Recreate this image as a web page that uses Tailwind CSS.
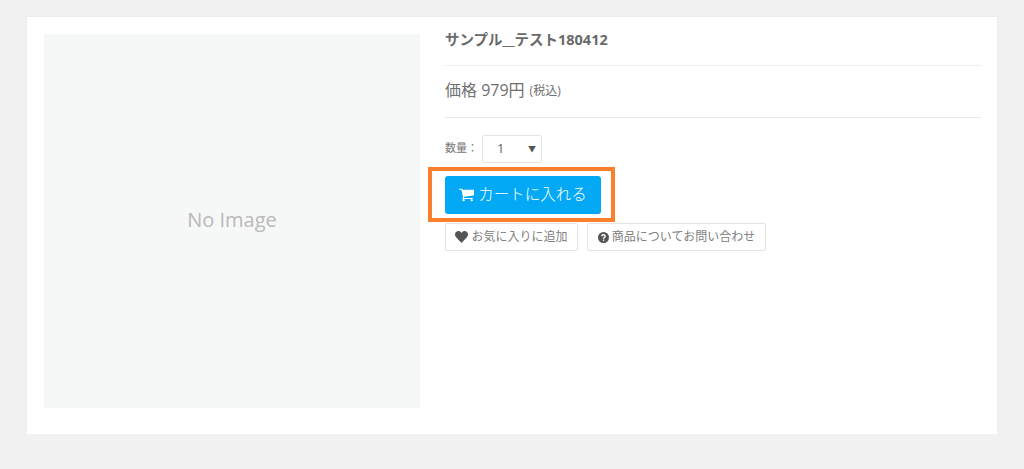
<!DOCTYPE html>
<html lang="ja">
<head>
  <meta charset="UTF-8" />
  <meta name="viewport" content="width=device-width, initial-scale=1.0" />
  <title>サンプル__テスト180412</title>
  <script src="https://cdn.jsdelivr.net/npm/@tailwindcss/browser@4"></script>
</head>
<body class="bg-[#f1f1f1] h-[469px] overflow-hidden font-['Open_Sans','Noto_Sans_CJK_JP',sans-serif] text-[#666]">
  <main class="mx-[27px] mt-4 h-[418px] w-[970px] absolute bg-white border-t border-[#ececec] flex pl-[17px] pt-[17px]">
    <!-- No Image -->
    <div class="w-[376px] h-[374px] bg-[#f6f8f7] flex items-center justify-center pb-[3px] text-[20px] text-[#b9b9b9]">No Image</div>

    <section class="w-[536px] ml-[25px]">
      <h1 class="h-[37px] -mt-[5px] pt-[1px] text-[14.5px] leading-[20px] font-bold text-[#6a6a6a] border-b border-[#eee]">サンプル__テスト180412</h1>

      <div class="h-[52px] flex items-center pb-[3px] border-b border-[#e8e8e8] text-[16px] text-[#707070]">
        価格 979円<span class="ml-[5px] text-[12px] mt-[2px]">(税込)</span>
      </div>

      <div class="mt-[17px] flex items-center text-[11px] text-[#777]">
        <span class="w-[37px] -mt-[2px]">数量：</span>
        <div class="w-[60px] h-[28px] border border-[#e5e5e5] rounded-[2px] flex items-center justify-between pl-[14px] pr-[5px] text-[13px] text-[#666]">
          <span>1</span><span class="text-[8px] text-[#555]">▼</span>
        </div>
      </div>

      <div class="relative mt-[13px] w-[156px]">
        <button class="w-[156px] h-[38px] bg-[#03a9f4] rounded-[3px] text-white text-[15.5px] font-light flex items-center justify-center gap-[4px]">
          <svg class="w-[15px] h-[14px]" viewBox="0 0 1664 1408" fill="currentColor"><path d="M640 1280q0 53-37.5 90.5T512 1408t-90.5-37.5T384 1280t37.5-90.5T512 1152t90.5 37.5T640 1280zm896 0q0 53-37.5 90.5T1408 1408t-90.5-37.5T1280 1280t37.500-90.5T1408 1152t90.5 37.5T1536 1280zm128-1088v512q0 24-16.5 42.5T1607 768L563 890q13 60 13 70 0 16-24 64h920q26 0 45 19t19 45-19 45-45 19H448q-26 0-45-19t-19-45q0-11 8-31.5t16-36 21.500-40T445 924L268 128H64q-26 0-45-19T0 64t19-45T64 0h256q16 0 28.500 6.500T368 24t13 24.500 8 26 5.500 29.500 4.500 24h1201q26 0 45 19t19 45z"/></svg>
          <span>カートに入れる</span>
        </button>
        <!-- annotation frame -->
        <div class="absolute -left-[17px] -top-[9px] w-[187px] h-[55px] border-4 border-[#fc7f2b]"></div>
      </div>

      <div class="mt-[9px] flex gap-[9px] text-[12px] text-[#808080]">
        <button class="w-[133px] h-[28px] border border-[#e3e3e3] rounded-[2px] flex items-center justify-center gap-[3px]">
          <svg class="w-[13px] h-[12px] text-[#555]" viewBox="0 0 24 22" fill="currentColor"><path d="M12 22 2 11.500C-1 8-.5 3.500 2.500 1.300 5.500-.8 9.500 0 12 3.500 14.500 0 18.500-.8 21.500 1.300 24.500 3.500 25 8 22 11.500z"/></svg>
          <span>お気に入りに追加</span>
        </button>
        <button class="w-[179px] h-[28px] border border-[#e3e3e3] rounded-[2px] flex items-center justify-center gap-[3px]">
          <svg class="w-[11px] h-[11px]" viewBox="0 0 22 22"><circle cx="11" cy="11" r="11" fill="#555"/><path d="M7.500 8.500C7.500 6.500 9 5.500 11 5.500s3.500 1.200 3.500 3c0 2.500-3.500 2.500-3.500 5" fill="none" stroke="#fff" stroke-width="2.600"/><rect x="9.600" y="15" width="2.800" height="2.800" fill="#fff"/></svg>
          <span>商品についてお問い合わせ</span>
        </button>
      </div>
    </section>
  </main>
</body>
</html>
